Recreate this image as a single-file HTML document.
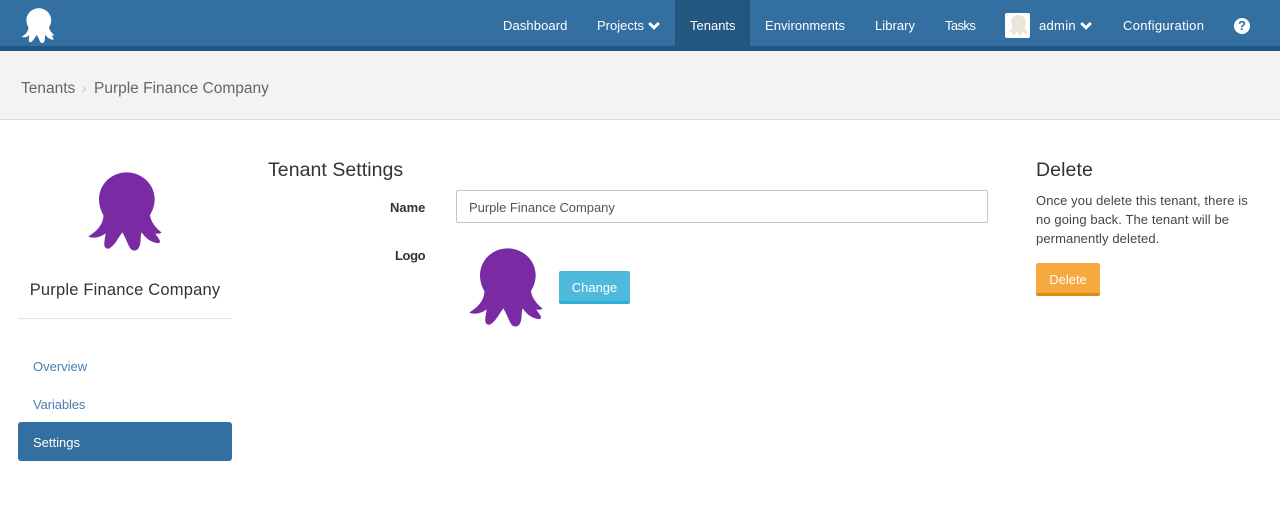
<!DOCTYPE html>
<html>
<head>
<meta charset="utf-8">
<style>
html,body{margin:0;padding:0;width:1280px;height:505px;overflow:hidden;background:#fff;font-family:"Liberation Sans",sans-serif;color:#333}
.a{position:absolute;white-space:nowrap;line-height:20px}
.n{color:#fff;font-size:13px;top:16px}
svg{position:absolute;display:block}
</style>
</head>
<body>
<svg width="0" height="0"><defs><symbol id="o" viewBox="0 0 270 270"><path d="M140 22C186 22 224 58 224 103C224 122 217 138 210 150C212 170 228 190 245 203C238 207 232 207 226 205C230 214 238 220 240 229C240 236 232 235 226 233C208 228 196 218 185 202C180 214 184 236 177 247C172 258 158 260 151 250C142 236 136 216 127 202C116 216 106 238 90 249C82 254 74 250 73 240C72 228 76 216 77 205C62 216 42 222 25 215C30 211 38 206 45 200C60 188 72 165 70 150C63 138 57 122 57 103C57 58 94 22 140 22Z"/></symbol></defs></svg>

<div style="position:absolute;left:0;top:0;width:1280px;height:46px;background:#3370a1"></div>
<div style="position:absolute;left:0;top:46px;width:1280px;height:5px;background:#235681"></div>
<div style="position:absolute;left:675px;top:0;width:75px;height:46px;background:#235681"></div>
<svg style="left:18px;top:5px" width="40" height="40" fill="#fff"><use href="#o"/></svg>

<div class="a n" style="left:503px;letter-spacing:.1px">Dashboard</div>
<div class="a n" style="left:597px">Projects</div>
<svg style="left:648px;top:21px" width="12" height="10" viewBox="0 0 12 10"><path d="M1.2 2L6 6.8L10.8 2" fill="none" stroke="#fff" stroke-width="3"/></svg>
<div class="a n" style="left:690px">Tenants</div>
<div class="a n" style="left:765px;letter-spacing:.05px">Environments</div>
<div class="a n" style="left:875px;letter-spacing:.05px">Library</div>
<div class="a n" style="left:945px;letter-spacing:-.6px">Tasks</div>
<div style="position:absolute;left:1005px;top:13px;width:25px;height:25px;background:#fff;border-radius:2px"></div>
<svg style="left:1006px;top:13px" width="24" height="24" fill="#e8e6d8"><use href="#o"/></svg>
<div class="a n" style="left:1039px;letter-spacing:.3px">admin</div>
<svg style="left:1080px;top:21px" width="12" height="10" viewBox="0 0 12 10"><path d="M1.2 2L6 6.8L10.8 2" fill="none" stroke="#fff" stroke-width="3"/></svg>
<div class="a n" style="left:1123px;letter-spacing:.3px">Configuration</div>
<div style="position:absolute;left:1234px;top:18px;width:16px;height:16px;border-radius:50%;background:#fff;color:#3370a1;font-size:13px;font-weight:bold;line-height:16px;text-align:center">?</div>

<div style="position:absolute;left:0;top:51px;width:1280px;height:68px;background:#f3f3f3;border-bottom:1px solid #dcdcdc"></div>
<div class="a" style="left:21px;top:79px;font-size:15.5px;color:#666">Tenants</div>
<svg style="left:81px;top:85px" width="6" height="8" viewBox="0 0 6 8"><path d="M1.5 1L4.5 4L1.5 7" fill="none" stroke="#ccc" stroke-width="1.2"/></svg>
<div class="a" style="left:94px;top:79px;font-size:15.5px;color:#666">Purple Finance Company</div>

<svg style="left:80px;top:165px" width="90" height="90" fill="#7a2ba3"><use href="#o"/></svg>
<div class="a" style="left:18px;top:280px;width:214px;text-align:center;font-size:16.5px;letter-spacing:.2px;color:#333">Purple Finance Company</div>
<div style="position:absolute;left:18px;top:318px;width:214px;height:1px;background:#e2e2e2"></div>
<div class="a" style="left:33px;top:357px;font-size:13px;color:#4a7eb0">Overview</div>
<div class="a" style="left:33px;top:395px;font-size:13px;color:#4a7eb0;letter-spacing:-.1px">Variables</div>
<div style="position:absolute;left:18px;top:422px;width:214px;height:39px;background:#3370a1;border-radius:3px"></div>
<div class="a" style="left:33px;top:433px;font-size:13px;color:#fff">Settings</div>

<div class="a" style="left:268px;top:160px;font-size:19.5px;letter-spacing:.05px;color:#333">Tenant Settings</div>
<div class="a" style="left:390px;top:198px;font-size:13px;font-weight:bold;color:#333">Name</div>
<div style="position:absolute;left:456px;top:190px;width:530px;height:31px;border:1px solid #c4c4c4;border-radius:2px;background:#fff"></div>
<div class="a" style="left:469px;top:198px;font-size:13px;color:#555;letter-spacing:-.04px">Purple Finance Company</div>
<div class="a" style="left:395px;top:246px;font-size:13px;font-weight:bold;letter-spacing:-.4px;color:#333">Logo</div>
<svg style="left:461px;top:241px" width="90" height="90" fill="#7a2ba3"><use href="#o"/></svg>
<div style="position:absolute;left:559px;top:271px;width:71px;height:33px;background:#4fb9dc;border-bottom:3px solid #2fafd6;box-sizing:border-box;border-radius:2px;color:#fff;font-size:13px;line-height:33px;text-align:center">Change</div>

<div class="a" style="left:1036px;top:160px;font-size:19.5px;letter-spacing:.1px;color:#333">Delete</div>
<div class="a" style="left:1036px;top:191px;font-size:13px;color:#444;letter-spacing:.1px">Once you delete this tenant, there is</div>
<div class="a" style="left:1036px;top:210px;font-size:13px;color:#444;letter-spacing:.1px">no going back. The tenant will be</div>
<div class="a" style="left:1036px;top:229px;font-size:13px;color:#444;letter-spacing:.1px">permanently deleted.</div>
<div style="position:absolute;left:1036px;top:263px;width:64px;height:33px;background:#f5a93f;border-bottom:3px solid #e08c0e;box-sizing:border-box;border-radius:2px;color:#fff;font-size:13px;line-height:33px;text-align:center">Delete</div>
</body>
</html>
